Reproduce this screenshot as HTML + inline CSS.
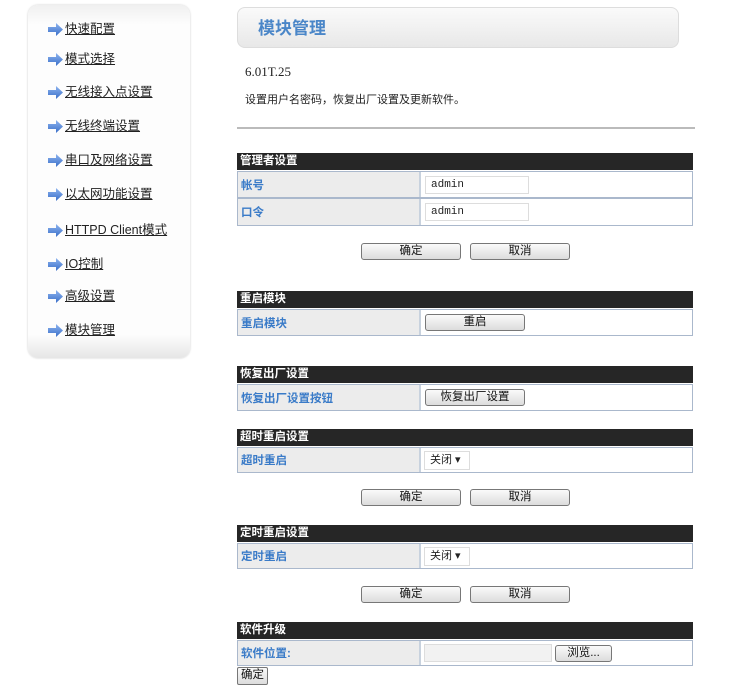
<!DOCTYPE html>
<html><head><meta charset="utf-8"><style>
*{margin:0;padding:0;box-sizing:border-box}
body{width:750px;height:691px;background:#fff;font-family:"Liberation Sans","Noto Sans CJK SC",sans-serif;font-size:12px;color:#222;position:relative;overflow:hidden}
.a{position:absolute}
.side{left:28px;top:5px;width:162px;height:353px;border-radius:10px;background:linear-gradient(#f0f0f0,#fdfdfd 20px,#fdfdfd 330px,#e6e6e6);box-shadow:0 0 2px #ccc}
.nav{left:48px;font-size:12.5px;color:#222;text-decoration:underline;white-space:nowrap}
.nav svg{vertical-align:middle;margin-right:2px}
.hd{left:237px;width:456px;height:17px;background:#262626;color:#fff;font-weight:bold;padding-left:3px;line-height:17px;font-size:11.5px}
.row{left:237px;width:456px;border:1px solid #aab8cc;background:#fff}
.lab{position:absolute;left:0;top:0;bottom:0;width:183px;background:#ececec;border-right:2px solid #c8d2de;color:#3a7bc8;font-weight:bold;padding-left:3px;font-size:11.5px;display:flex;align-items:center}
.btn{position:absolute;height:17px;border:1px solid #777;border-radius:3px;background:linear-gradient(#fafafa,#dcdcdc);font-size:11.5px;text-align:center;line-height:15px;color:#111}
.inp{position:absolute;border:1px solid #ddd;background:#fff;font-family:"Liberation Mono",monospace;font-size:11px;padding-left:5px;line-height:17px}
</style></head><body>
<div class="a side"></div>
<svg width="0" height="0" style="position:absolute"><defs><linearGradient id="g" x1="0" y1="0" x2="0" y2="1"><stop offset="0" stop-color="#8db4ef"/><stop offset="1" stop-color="#3a6fc8"/></linearGradient></defs></svg>
<div class="a nav" style="top:18px"><svg width="15" height="13"><path d="M0 4h8V0l7 6.5-7 6.5V9H0z" fill="url(#g)"/></svg>快速配置</div>
<div class="a nav" style="top:48px"><svg width="15" height="13"><path d="M0 4h8V0l7 6.5-7 6.5V9H0z" fill="url(#g)"/></svg>模式选择</div>
<div class="a nav" style="top:81px"><svg width="15" height="13"><path d="M0 4h8V0l7 6.5-7 6.5V9H0z" fill="url(#g)"/></svg>无线接入点设置</div>
<div class="a nav" style="top:115px"><svg width="15" height="13"><path d="M0 4h8V0l7 6.5-7 6.5V9H0z" fill="url(#g)"/></svg>无线终端设置</div>
<div class="a nav" style="top:149px"><svg width="15" height="13"><path d="M0 4h8V0l7 6.5-7 6.5V9H0z" fill="url(#g)"/></svg>串口及网络设置</div>
<div class="a nav" style="top:183px"><svg width="15" height="13"><path d="M0 4h8V0l7 6.5-7 6.5V9H0z" fill="url(#g)"/></svg>以太网功能设置</div>
<div class="a nav" style="top:219px"><svg width="15" height="13"><path d="M0 4h8V0l7 6.5-7 6.5V9H0z" fill="url(#g)"/></svg>HTTPD Client模式</div>
<div class="a nav" style="top:253px"><svg width="15" height="13"><path d="M0 4h8V0l7 6.5-7 6.5V9H0z" fill="url(#g)"/></svg>IO控制</div>
<div class="a nav" style="top:285px"><svg width="15" height="13"><path d="M0 4h8V0l7 6.5-7 6.5V9H0z" fill="url(#g)"/></svg>高级设置</div>
<div class="a nav" style="top:319px"><svg width="15" height="13"><path d="M0 4h8V0l7 6.5-7 6.5V9H0z" fill="url(#g)"/></svg>模块管理</div>

<div class="a" style="left:237px;top:7px;width:442px;height:41px;border:1px solid #ddd;border-radius:8px;background:linear-gradient(#fafafa,#e8e8e8);"></div>
<div class="a" style="left:258px;top:14px;font-size:17px;color:#4a86c8;font-weight:bold">模块管理</div>
<div class="a" style="left:245px;top:64px;font-family:'Liberation Serif',serif;font-size:13px">6.01T.25</div>
<div class="a" style="left:245px;top:91px;font-size:11px">设置用户名密码，恢复出厂设置及更新软件。</div>
<div class="a" style="left:237px;top:127px;width:458px;height:2px;background:#bbb"></div>

<div class="a hd" style="top:153px">管理者设置</div>
<div class="a row" style="top:171px;height:27px"><div class="lab">帐号</div><div class="inp" style="left:187px;top:4px;width:104px;height:18px">admin</div></div>
<div class="a row" style="top:198px;height:28px"><div class="lab">口令</div><div class="inp" style="left:187px;top:4px;width:104px;height:18px">admin</div></div>
<div class="btn" style="left:361px;top:243px;width:100px">确定</div>
<div class="btn" style="left:470px;top:243px;width:100px">取消</div>

<div class="a hd" style="top:291px">重启模块</div>
<div class="a row" style="top:309px;height:27px"><div class="lab">重启模块</div><div class="btn" style="left:187px;top:4px;width:100px">重启</div></div>

<div class="a hd" style="top:366px">恢复出厂设置</div>
<div class="a row" style="top:384px;height:27px"><div class="lab">恢复出厂设置按钮</div><div class="btn" style="left:187px;top:4px;width:100px">恢复出厂设置</div></div>

<div class="a hd" style="top:429px">超时重启设置</div>
<div class="a row" style="top:447px;height:26px"><div class="lab">超时重启</div><div class="inp" style="left:186px;top:3px;width:46px;height:19px;font-family:'Liberation Sans','Noto Sans CJK SC',sans-serif">关闭 ▾</div></div>
<div class="btn" style="left:361px;top:489px;width:100px">确定</div>
<div class="btn" style="left:470px;top:489px;width:100px">取消</div>

<div class="a hd" style="top:525px">定时重启设置</div>
<div class="a row" style="top:543px;height:26px"><div class="lab">定时重启</div><div class="inp" style="left:186px;top:3px;width:46px;height:19px;font-family:'Liberation Sans','Noto Sans CJK SC',sans-serif">关闭 ▾</div></div>
<div class="btn" style="left:361px;top:586px;width:100px">确定</div>
<div class="btn" style="left:470px;top:586px;width:100px">取消</div>

<div class="a hd" style="top:622px">软件升级</div>
<div class="a row" style="top:640px;height:26px"><div class="lab">软件位置:</div><div class="inp" style="left:186px;top:3px;width:128px;height:18px;background:#f2f2f2"></div><div class="btn" style="left:317px;top:4px;width:57px">浏览...</div></div>
<div class="btn" style="left:237px;top:667px;width:31px;height:18px;border-radius:2px">确定</div>
</body></html>
